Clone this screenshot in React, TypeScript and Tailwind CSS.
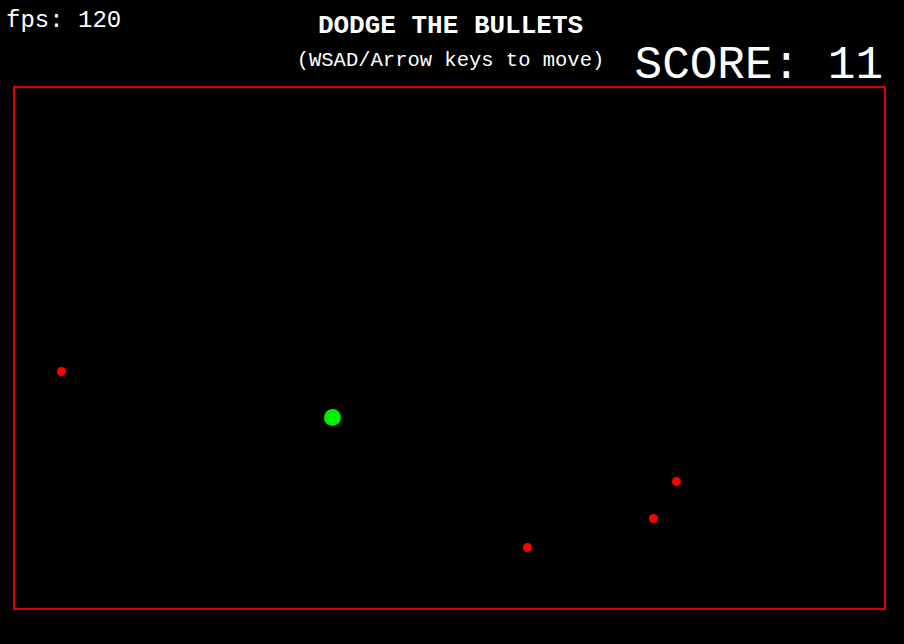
const bullets = [
  { x: 61, y: 371 },
  { x: 676, y: 481 },
  { x: 653, y: 518 },
  { x: 527, y: 547 },
];

const player = { x: 332, y: 417 };

// arena inner origin in page coordinates (left border 13px + 2px stroke)
const ORIGIN_X = 15;
const ORIGIN_Y = 88;

export default function App() {
  return (
    <div
      className="w-[904px] h-[644px] bg-black text-white overflow-hidden"
      style={{
        fontFamily:
          '"Courier New", "Nimbus Mono PS", "Nimbus Mono L", FreeMono, Courier, "Liberation Mono", monospace',
      }}>
      <header className="grid grid-cols-[1fr_auto_1fr] h-[86px]">
        <div className="pl-[6px] pt-[9px] text-[24px] leading-none">fps: 120</div>
        <div className="flex flex-col items-center mr-[3px]">
          <h1 className="pt-[13px] text-[26px] font-bold leading-none">
            DODGE THE BULLETS
          </h1>
          <p className="mt-[12px] text-[20.5px] leading-none whitespace-nowrap">
            (WSAD/Arrow keys to move)
          </p>
        </div>
        <div className="flex justify-end items-start pr-[21px] pt-[43px]">
          <span className="text-[46px] leading-none whitespace-nowrap">SCORE: 11</span>
        </div>
      </header>

      <main className="relative ml-[13px] w-[873px] h-[524px] border-2 border-[#e00000]">
        {bullets.map((b, i) => (
          <span
            key={i}
            className="absolute w-[9px] h-[9px] rounded-full bg-[#ff0000]"
            style={{ left: b.x - 4.5 - ORIGIN_X, top: b.y - 4.5 - ORIGIN_Y }}
          />
        ))}
        <span
          className="absolute w-[17px] h-[17px] rounded-full bg-[#00ee00]"
          style={{ left: player.x - 8.5 - ORIGIN_X, top: player.y - 8.5 - ORIGIN_Y }}
        />
      </main>
    </div>
  );
}
